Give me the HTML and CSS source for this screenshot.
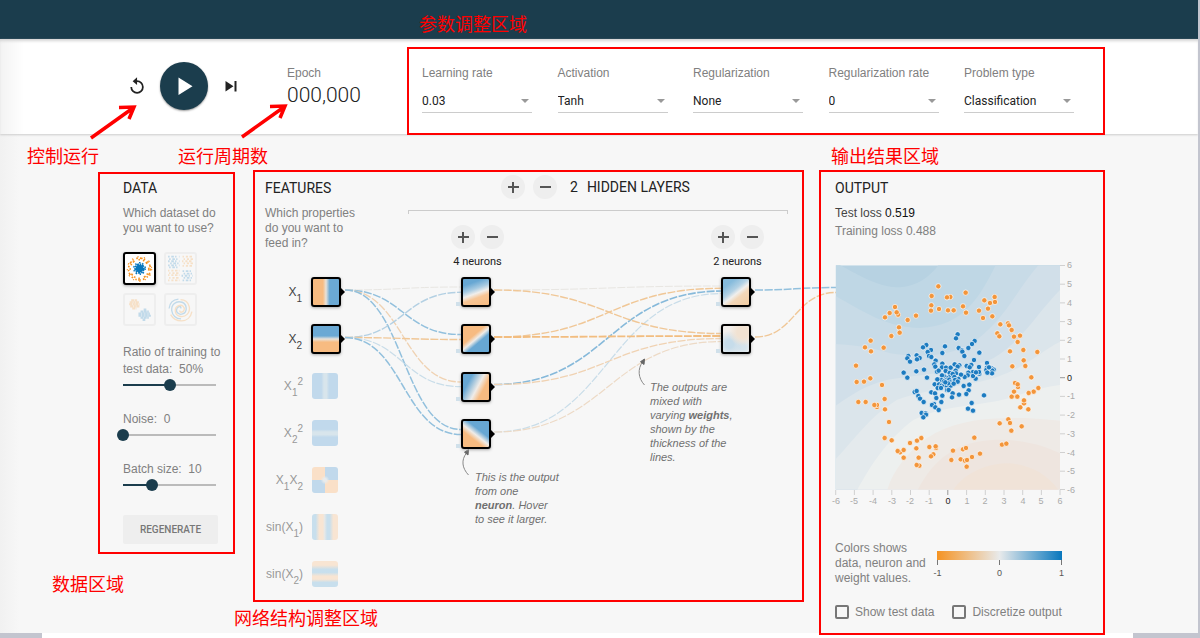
FILE: index.html
```html
<!DOCTYPE html>
<html lang="en">
<head>
<meta charset="utf-8">
<title>Neural network playground</title>
<link rel="stylesheet" href="styles.css">
</head>
<body>
<header class="masthead"></header>

<section class="toolbar">
  <div class="transport">
    <button class="icon-btn" aria-label="Reset"><svg width="24" height="24" viewBox="0 0 24 24"><path d="M12 6V2.500L7 7l5 4.500V8a5.600 5.600 0 1 1-5.600 5.600H4.400A7.600 7.600 0 1 0 12 6z" transform="translate(1.500 1) scale(.88)"/></svg></button>
    <button class="play" aria-label="Run"><svg width="48" height="48" viewBox="0 0 48 48"><path d="M18.500 15.500v17.500L32.500 24.300z"/></svg></button>
    <button class="icon-btn" aria-label="Step"><svg width="24" height="24" viewBox="0 0 24 24"><path d="M6.500 7v10.500l8-5.200zM15.500 7h2v10.500h-2z"/></svg></button>
    <svg class="pointer pointer-run" width="50" height="40" viewBox="0 0 50 40"><path d="M3 36L45 6M31 5.500L46 5L41 17"/></svg>
    <span class="note note-run" lang="zh">控制运行</span>
  </div>
  <div class="epoch">
    <span class="label">Epoch</span>
    <output class="epoch-value">000,000</output>
    <svg class="pointer pointer-epoch" width="50" height="40" viewBox="0 0 50 40"><path d="M3 36L45 6M31 5.500L46 5L41 17"/></svg>
    <span class="note note-epoch" lang="zh">运行周期数</span>
  </div>
  <form class="params framed">
    <span class="note note-params" lang="zh">参数调整区域</span>
    <div class="field"><label for="rate">Learning rate</label><select id="rate"><option>0.03</option></select></div>
    <div class="field"><label for="act">Activation</label><select id="act"><option>Tanh</option></select></div>
    <div class="field"><label for="reg">Regularization</label><select id="reg"><option>None</option></select></div>
    <div class="field"><label for="regrate">Regularization rate</label><select id="regrate"><option>0</option></select></div>
    <div class="field"><label for="problem">Problem type</label><select id="problem"><option>Classification</option></select></div>
  </form>
</section>

<main class="board">
  <section class="data framed">
    <h2>DATA</h2>
    <p class="lead">Which dataset do you want to use?</p>
    <div class="datasets">
      <button class="dataset selected" aria-label="Circle"><svg viewBox="0 0 28 28">
        <g fill="none" stroke="#f59322" stroke-width="1.600"><circle cx="14" cy="14.500" r="10.600" stroke-dasharray="1.600 2.100 2.600 1.400 1.300 2.600"/><circle cx="14" cy="14.500" r="9" stroke-dasharray="1.500 2.900 1.500 1.800 2 4"/><circle cx="14" cy="14.500" r="11.800" stroke-width="1" stroke-dasharray="1.200 4.200 1.500 5"/></g>
        <g fill="none" stroke="#0877bd"><circle cx="14" cy="14" r="1.800" stroke-width="3.600"/><circle cx="14" cy="14" r="4.200" stroke-width="1.800" stroke-dasharray="2.500 .8 1.500 .6"/><circle cx="14" cy="14" r="5.600" stroke-width="1.300" stroke-dasharray="1.300 2.600 1.500 1.700"/></g></svg></button>
      <button class="dataset" aria-label="Exclusive or"><svg viewBox="0 0 28 28">
        <g fill="none" stroke-width="1.700"><path stroke="#0877bd" stroke-dasharray="1.500 1.600 2.500 1.200 1.300 2.400" d="M2 2.500h11M3 5h10M2 7h11M4 9h9M2 11h11M3 13h9M16 16.500h10M17 19h9M15 21h11M17 23h8M16 25.500h10"/><path stroke="#f59322" stroke-dasharray="1.300 1.900 2 1.500 2.400 1.300" d="M16 2.500h10M17 5h9M15.500 7h10M17 9h9M16 11.500h10M2 16h11M3 18.500h9M2 20.500h11M3 23h10M2 25.500h11"/></g></svg></button>
      <button class="dataset" aria-label="Gaussian"><svg viewBox="0 0 28 28">
        <g fill="none"><path stroke="#f59322" stroke-width="2" stroke-dasharray="3 .5 2 .4" d="M6 5h6M4.500 7h9M4 9h10M5 11h9M7 13h4"/><path stroke="#0877bd" stroke-width="2" stroke-dasharray="2.600 .4 3 .4" d="M18 14h3M15 16h8M13 18h11M13 20h12M15 22h8M17 24h3"/></g></svg></button>
      <button class="dataset" aria-label="Spiral"><svg viewBox="0 0 28 28">
        <g fill="none" stroke-width="1.300"><path stroke="#0877bd" d="M14 13C15.500 11 12 10 10.500 13c-1.600 3.500 2 6.600 5.500 5.300C21 16.500 20.500 9 15.500 7 9.500 5 5 9.500 5.500 15c.6 4.500 4 8 9 8M3 13C3.500 8 7 4.500 12 4"/><path stroke="#f59322" d="M13.500 15C12.500 17 16.500 17.500 17.500 14.500c1-3-2-5.500-5.300-4.300C7.500 12 8 19 13 20.500c6 1.700 10.500-3.500 9.500-9C21.500 7 18 4.500 14 4.500M4.500 19c2.500 4.500 6 6 10.500 6 5 0 9-3.500 10-9"/></g></svg></button>
    </div>
    <div class="slider"><label for="ratio">Ratio of training to<br>test data:&nbsp; 50%</label><input id="ratio" type="range" min="0" max="100" value="50" style="--fill:.5"></div>
    <div class="slider"><label for="noise">Noise:&nbsp; 0</label><input id="noise" type="range" min="0" max="50" value="0" style="--fill:0"></div>
    <div class="slider"><label for="batch">Batch size:&nbsp; 10</label><input id="batch" type="range" min="1" max="30" value="10" style="--fill:.31"></div>
    <button class="regenerate">REGENERATE</button>
    <span class="note note-data" lang="zh">数据区域</span>
  </section>

  <section class="network framed">
    <svg class="wires" width="551" height="432" viewBox="253 170 551 432">
      <g class="wire">
        <path class="w0" d="M345 290C403 290 403 287 461 287"/>
        <path class="b2" d="M345 290C403 290 403 334.500 461 334.500"/>
        <path class="o1" d="M345 290C403 290 403 382 461 382"/>
        <path class="b2" d="M345 290C403 290 403 429.500 461 429.500"/>
        <path class="b1" d="M345 337.500C403 337.500 403 292.300 461 292.300"/>
        <path class="o2" d="M345 337.500C403 337.500 403 339.500 461 339.500"/>
        <path class="b0" d="M345 337.500C403 337.500 403 386.700 461 386.700"/>
        <path class="b2" d="M345 337.500C403 337.500 403 434.500 461 434.500"/>
        <path class="w0" d="M494 290C608 290 608 286 722 286"/>
        <path class="o2" d="M494 337C608 337 608 288.300 722 288.300"/>
        <path class="b3" d="M494 384.500C608 384.500 608 291 722 291"/>
        <path class="b0" d="M494 432C608 432 608 293.500 722 293.500"/>
        <path class="o2" d="M494 290C608 290 608 333.500 722 333.500"/>
        <path class="o3" d="M494 337C608 337 608 336 722 336"/>
        <path class="o1" d="M494 384.500C608 384.500 608 338.500 722 338.500"/>
        <path class="o0" d="M494 432C608 432 608 341.500 722 341.500"/>
        <path class="b2" d="M755 290C795 290 795 287.500 836 287.500"/>
        <path class="o2" d="M755 337C795 337 795 292.500 836 292.500"/>
      </g>
      <g class="hint-line">
        <path d="M468.500 475C462 468 461 460 466.500 453"/><path class="tip" d="M468.500 449.500l-.5 5.500-3.500-2.800z"/>
        <path d="M644.500 385C638 378 637.500 369 642.500 362"/><path class="tip" d="M644.500 359l-.5 5.500-3.500-2.800z"/>
      </g>
    </svg>

    <div class="features">
      <h2>FEATURES</h2>
      <p class="lead">Which properties do you want to feed in?</p>
      <ul class="feature-list">
        <li><span>X<sub>1</sub></span><i class="node t-x1"></i></li>
        <li><span>X<sub>2</sub></span><i class="node t-x2"></i></li>
        <li class="off"><span>X<sub>1</sub><sup>2</sup></span><i class="node t-x1sq"></i></li>
        <li class="off"><span>X<sub>2</sub><sup>2</sup></span><i class="node t-x2sq"></i></li>
        <li class="off"><span>X<sub>1</sub>X<sub>2</sub></span><i class="node t-x1x2"></i></li>
        <li class="off"><span>sin(X<sub>1</sub>)</span><i class="node t-sin1"></i></li>
        <li class="off"><span>sin(X<sub>2</sub>)</span><i class="node t-sin2"></i></li>
      </ul>
    </div>

    <div class="hidden">
      <div class="hidden-head">
        <div class="pair wide"><button class="round" aria-label="Add layer"></button><button class="round minus" aria-label="Remove layer"></button></div>
        <h2><span class="count">2</span>HIDDEN LAYERS</h2>
      </div>
      <div class="bracket"></div>
      <div class="layers">
        <div class="layer">
          <div class="pair"><button class="round" aria-label="Add neuron"></button><button class="round minus" aria-label="Remove neuron"></button></div>
          <p class="neurons">4 neurons</p>
          <div class="stack"><i class="node biased t-a1"></i><i class="node biased t-a2"></i><i class="node biased t-a3"></i><i class="node biased t-a4"></i></div>
        </div>
        <div class="layer">
          <div class="pair"><button class="round" aria-label="Add neuron"></button><button class="round minus" aria-label="Remove neuron"></button></div>
          <p class="neurons">2 neurons</p>
          <div class="stack two"><i class="node biased t-b1"></i><i class="node biased t-b2"></i></div>
        </div>
      </div>
    </div>

    <p class="hint hint-neuron">This is the output<br>from one<br><b>neuron</b>. Hover<br>to see it larger.</p>
    <p class="hint hint-weights">The outputs are<br>mixed with<br>varying <b>weights</b>,<br>shown by the<br>thickness of the<br>lines.</p>
    <span class="note note-network" lang="zh">网络结构调整区域</span>
  </section>

  <section class="output framed">
    <span class="note note-output" lang="zh">输出结果区域</span>
    <h2>OUTPUT</h2>
    <p class="loss">Test loss <b>0.519</b></p>
    <p class="loss train">Training loss 0.488</p>
    <svg class="chart" width="244" height="240" viewBox="15 15 244 240">
      <defs>
        <clipPath id="plot"><path d="M47 46h673v673H47z"/></clipPath>
        <marker id="po" markerUnits="userSpaceOnUse" markerWidth="20" markerHeight="20" refX="10" refY="10"><circle cx="10" cy="10" r="8" fill="#f3953a" stroke="#fff" stroke-width="2"/></marker>
        <marker id="pb" markerUnits="userSpaceOnUse" markerWidth="20" markerHeight="20" refX="10" refY="10"><circle cx="10" cy="10" r="8" fill="#1c7bc0" stroke="#fff" stroke-width="2"/></marker>
      </defs>
      <g transform="scale(.33333)">
        <g clip-path="url(#plot)">
          <path fill="#b7d2e2" d="M47 46h673v673H47z"/>
          <path fill="#bfd7e5" d="M47 38L65 48C150 95 190 112 240 112C290 110 330 80 355 46H720V719H47z"/>
          <path fill="#c8dbe7" d="M47 138C130 185 200 232 300 234C430 230 480 140 527 46H720V719H47z"/>
          <path fill="#d1dfe9" d="M47 282C100 285 150 290 210 310C300 325 400 320 470 270C560 200 590 120 655 46H720V719H47z"/>
          <path fill="#dbe5eb" d="M47 467C100 430 140 405 200 390C320 372 430 365 520 325C610 270 650 190 720 120V719H47z"/>
          <path fill="#e4eaed" d="M47 628C110 560 150 500 230 450C340 410 470 410 560 370C630 340 670 300 720 275V719H47z"/>
          <path fill="#edf0ef" d="M112 719C150 650 200 570 280 510C380 460 490 470 580 440C640 420 680 410 720 405V719z"/>
          <path fill="#eeeae6" d="M202 719C220 660 260 610 320 565C390 520 470 505 560 505C630 502 680 510 720 512V719z"/>
          <path fill="#eee5df" d="M293 719C320 670 350 625 420 590C500 560 620 560 720 610V719z"/>
          <path fill="#f0e3d8" d="M400 719C430 675 490 642 560 640C620 640 680 670 715 719z"/>
        </g>
        <polyline fill="none" marker-start="url(#po)" marker-mid="url(#po)" marker-end="url(#po)" points="355,109 335,138 437,128 391,141 381,142 334,166 333,182 357,177 384,181 401,181 429,169 438,188 477,182 493,151 524,141 525,156 510,159 504,176 489,204 517,199 225,171 209,189 234,194 230,187 195,202 263,210 288,197 237,232 239,248 214,258 152,272 135,292 153,304 191,293 108,347 110,396 132,395 151,385 186,405 115,456 137,456 171,471 171,465 163,465 194,447 195,478 207,516 194,564 215,571 270,579 291,572 304,564 289,595 240,607 233,603 251,600 251,623 296,623 298,647 290,645 328,591 348,594 347,589 340,613 333,619 399,602 394,630 429,598 438,594 422,628 435,632 441,630 456,621 480,611 440,650 463,563 541,223 564,220 567,226 575,240 532,250 538,259 582,260 600,257 593,276 570,304 610,300 652,306 611,331 616,348 577,349 634,382 655,414 641,425 626,429 585,399 594,411 593,403 582,425 590,439 592,440 575,440 612,460 612,451 601,472 625,478 539,520 565,508 570,519 574,542 605,529 546,584 559,581"/>
        <polyline fill="none" marker-start="url(#pb)" marker-mid="url(#pb)" marker-end="url(#pb)" points="413,253 408,265 464,273 456,282 375,289 367,309 319,285 309,292 333,300 323,306 327,318 334,321 265,318 262,325 270,335 290,316 299,324 291,328 416,294 426,301 427,305 445,294 478,308 433,318 462,330 347,332 343,343 346,350 312,359 289,364 251,368 262,383 321,383 367,341 366,352 378,353 392,353 404,343 418,346 413,350 407,362 408,370 440,348 454,345 449,352 477,351 501,339 501,353 515,355 521,359 499,360 517,362 516,370 502,368 478,371 477,366 459,366 445,368 443,376 434,381 423,374 415,387 467,386 459,378 351,365 356,362 377,363 389,369 388,382 378,383 371,378 366,376 355,388 365,390 377,391 388,389 394,395 398,372 403,381 401,394 405,390 413,395 344,403 357,403 365,407 373,405 381,409 392,407 353,414 363,414 381,420 386,420 431,408 448,404 446,421 439,432 417,434 398,430 396,442 284,426 290,423 295,438 300,446 311,456 334,427 345,430 349,444 367,437 364,456 342,462 336,465 346,472 356,480 305,489 317,490 318,494 310,502 444,476 455,459 459,482 492,436 401,401 372,394 384,400 376,397 468,367 507,352 352,388"/>
      </g>
      <g class="axis" stroke="#d0d0d0">
        <path d="M240 15.500h5M240 34.200h5M240 52.900h5M240 71.600h5M240 90.300h5M240 109h5M240 146.400h5M240 165.100h5M240 183.800h5M240 202.500h5M240 221.200h5M240 239.500h5M15.700 240v5M34.400 240v5M53.100 240v5M71.800 240v5M90.500 240v5M109.200 240v5M146.600 240v5M165.300 240v5M184 240v5M202.700 240v5M221.400 240v5M240 240v5"/>
        <path stroke="#999" d="M240 127.700h5M127.800 240v5"/>
      </g>
      <g class="axis-text">
        <text x="247" y="18">6</text><text x="247" y="37">5</text><text x="247" y="56">4</text><text x="247" y="75">3</text><text x="247" y="93">2</text><text x="247" y="112">1</text><text class="zero" x="247" y="131">0</text><text x="247" y="149">-1</text><text x="247" y="168">-2</text><text x="247" y="187">-3</text><text x="247" y="206">-4</text><text x="247" y="224">-5</text><text x="247" y="243">-6</text>
      </g>
      <g class="axis-text mid">
        <text x="16" y="254">-6</text><text x="34" y="254">-5</text><text x="53" y="254">-4</text><text x="72" y="254">-3</text><text x="90" y="254">-2</text><text x="109" y="254">-1</text><text class="zero" x="128" y="254">0</text><text x="147" y="254">1</text><text x="165" y="254">2</text><text x="184" y="254">3</text><text x="203" y="254">4</text><text x="221" y="254">5</text><text x="240" y="254">6</text>
      </g>
    </svg>
    <div class="legend">
      <p class="lead">Colors shows data, neuron and weight values.</p>
      <div class="scale"><div class="ramp"></div><div class="marks"><span>-1</span><span>0</span><span>1</span></div></div>
    </div>
    <div class="checks">
      <label><input type="checkbox">Show test data</label>
      <label><input type="checkbox">Discretize output</label>
    </div>
  </section>
</main>
<footer class="edge"></footer>
</body>
</html>
```
FILE: styles.css
```css
* { box-sizing: border-box; }
body {
  margin: 0;
  min-height: 100vh;
  display: flex;
  flex-direction: column;
  background: #f7f7f7;
  border-right: 2px solid #c3c5cf;
  color: #808080;
  font: 400 12px/15px "Liberation Sans", sans-serif;
}
h2, p, ul { margin: 0; padding: 0; }
h2 { font: 400 14px/18px Roboto, sans-serif; color: #222; }
button { border: 0; padding: 0; background: none; font-family: inherit; }
svg { display: block; }

/* Red annotation frames and captions */
.framed { position: relative; }
.framed::after {
  content: "";
  position: absolute;
  inset: 0;
  border: 2px solid #f00;
  pointer-events: none;
  z-index: 2;
}
.note {
  position: absolute;
  z-index: 3;
  white-space: nowrap;
  color: #f00;
  font: 400 18px/24px "Noto Sans CJK SC", sans-serif;
}
.note-run { left: -98px; top: 81px; }
.note-epoch { left: -109px; top: 78px; }
.note-params { left: 12px; top: -36px; }
.note-data { left: -46px; bottom: -41px; }
.note-network { left: -19px; bottom: -27px; }
.note-output { left: 12px; top: -27px; }
.pointer { position: absolute; z-index: 3; fill: none; stroke: #f00; stroke-width: 3.5; }
.pointer-run { left: -37px; top: 40px; }
.pointer-epoch { left: -48px; top: 36px; }

.masthead { height: 39px; background: #1b3d4d; }
.toolbar {
  position: relative;
  display: flex;
  align-items: flex-start;
  padding: 8px 93px 0 98px;
  background: linear-gradient(90deg, #f3f3f3, #fff 24px);
  box-shadow: inset 0 3px 3px -1px #d5d5d5, 0 1px 2px #ccc;
}
.transport { position: relative; display: flex; align-items: center; gap: 11px; margin: 15px 0 0 27px; }
.icon-btn { width: 24px; height: 24px; fill: #222; }
.play { width: 48px; height: 48px; border-radius: 50%; background: #1b3d4d; fill: #fff; box-shadow: 0 1px 2px #999; }
.epoch { position: relative; display: flex; flex-direction: column; margin: 18px 0 0 44px; line-height: 16px; }
.epoch-value { font: 300 21px/28px Roboto, sans-serif; color: #222; }
.params {
  display: flex;
  justify-content: space-between;
  flex: 0 1 698px;
  margin: 0 0 -1px auto;
  padding: 18px 31px 22px 15px;
}
.field { position: relative; display: flex; flex-direction: column; gap: 8px; width: 110px; line-height: 16px; }
.field label { white-space: nowrap; }
.field::after {
  content: "";
  position: absolute;
  right: 3px;
  bottom: 10px;
  border: 4px solid transparent;
  border-top-color: #999;
  border-bottom: 0;
}
select {
  appearance: none;
  height: 24px;
  padding: 0;
  border: 0;
  border-bottom: 1px solid #ccc;
  background: none;
  color: #222;
  font: 400 12px/20px Roboto, sans-serif;
}

.board {
  flex: 1;
  display: grid;
  grid-template-columns: 137px minmax(554px, 1fr) 286px;
  column-gap: 15px;
  align-items: start;
  padding: 36px 93px 0 98px;
  background: linear-gradient(90deg, #f1f1f1, #f7f7f7 20px);
}

/* Data column */
.data { margin-top: 2px; padding: 7px 16px 10px 25px; }
.lead { margin-top: 9px; }
.datasets { display: grid; grid-template-columns: 33px 33px; gap: 8px; margin: 16px 0 18px; }
.dataset { width: 33px; height: 33px; border: 2px solid #eee; border-radius: 3px; }
.dataset svg { opacity: .22; }
.dataset.selected { border-color: #000; background: #fff; box-shadow: 0 1px 3px #aaa; }
.dataset.selected svg { opacity: 1; }
.slider { display: flex; flex-direction: column; line-height: 17px; margin-bottom: 19px; white-space: nowrap; }
input[type="range"] {
  appearance: none;
  width: 105px;
  height: 14px;
  margin: 0 -6px;
  background:
    linear-gradient(#1b3d4d, #1b3d4d) 6px center / calc(var(--fill) * 93px) 2px no-repeat,
    linear-gradient(#bbb, #bbb) 6px center / 93px 2px no-repeat;
}
input[type="range"]::-webkit-slider-thumb { appearance: none; width: 12px; height: 12px; border-radius: 50%; background: #1b3d4d; }
.regenerate { width: 95px; height: 29px; margin-top: 4px; border-radius: 2px; background: #eee; color: #777; font: 500 10px/29px Roboto, sans-serif; }

/* Network */
.network { display: flex; height: 432px; margin-left: 3px; padding: 0 16px 0 12px; }
.wires { position: absolute; left: 0; top: 0; overflow: visible; }
.wire { fill: none; stroke-dasharray: 8 1.500; }
.w0 { stroke: #e8e6e2; stroke-width: 1; }
.b0 { stroke: #c9dde9; stroke-width: 1.200; }
.b1 { stroke: #b3d0e3; stroke-width: 1.400; }
.b2 { stroke: #92c0dd; stroke-width: 1.500; }
.b3 { stroke: #86b9da; stroke-width: 1.600; }
.o0 { stroke: #eddac6; stroke-width: 1.200; }
.o1 { stroke: #f0d2b2; stroke-width: 1.300; }
.o2 { stroke: #f0c797; stroke-width: 1.400; }
.o3 { stroke: #f2bd80; stroke-width: 1.800; }
.hint-line { fill: none; stroke: #888; stroke-width: 1; }
.hint-line .tip { fill: #666; stroke: #666; }
.features { position: relative; width: 76px; padding-top: 9px; }
.features .lead { width: 96px; }
.feature-list { display: flex; flex-direction: column; justify-content: space-between; height: 312px; margin-top: 26px; list-style: none; }
.feature-list li { display: flex; justify-content: flex-end; align-items: center; gap: 9px; height: 30px; color: #444; white-space: nowrap; }
.feature-list .off { color: #999; padding-right: 3px; }
sub, sup { font-size: 10px; line-height: 0; }
sub { vertical-align: -6px; }
sup { vertical-align: 5px; }
.node { position: relative; display: block; flex: none; width: 30px; height: 30px; border: 2px solid #000; border-radius: 3px; box-shadow: 0 1px 3px #aaa; }
.node::after { content: ""; position: absolute; right: -6px; top: 9px; border: 4px solid transparent; border-left-color: #000; border-right: 0; }
.biased::before { content: ""; position: absolute; left: -7px; bottom: -1px; width: 4px; height: 4px; background: #d0e0ea; }
.off .node { width: 26px; height: 26px; border: 0; box-shadow: none; }
.off .node::after { content: none; }
.t-x1 { background: linear-gradient(90deg, #f7bb81 38%, #e8e2da 50%, #6ba9d4 64%); }
.t-x2 { background: linear-gradient(#6ba9d4 38%, #e8e2da 50%, #f7bb81 62%); }
.t-x1sq { background: linear-gradient(90deg, #c1d9ec 36%, #d8e5ec 46% 56%, #c1d9ec 66%); }
.t-x2sq { background: linear-gradient(#c1d9ec 36%, #d8e5ec 46% 56%, #c1d9ec 66%); }
.t-x1x2 { background: radial-gradient(#e8ebec 8%, transparent 24%), conic-gradient(#c1d9ec 25%, #fae0c8 0 50%, #c1d9ec 0 75%, #fae0c8 0); }
.t-sin1 { background: linear-gradient(90deg, #c8dfed 14%, #f8e5d3 28% 42%, #e8e8e6 48%, #c8dfed 58% 68%, #f8e5d3 82%); }
.t-sin2 { background: linear-gradient(#f8e5d3 16%, #c8dfed 32% 44%, #f8e5d3 58% 70%, #c8dfed 82%); }
.t-a1 { background: linear-gradient(160deg, #67a7d3 20%, #a8cbe2 40%, #f0eeeb 54%, #f7c595 68%, #f7bb81); }
.t-a2 { background: linear-gradient(140deg, #f7bb81 38%, #efece8 50%, #67a7d3 62%); }
.t-a3 { background: linear-gradient(118deg, #67a7d3 24%, #efece8 54%, #f7bb81 72%); }
.t-a4 { background: linear-gradient(38deg, #f7bb81 34%, #efece8 48%, #67a7d3 64%); }
.t-b1 { background: linear-gradient(142deg, #86bbdc 20%, #b4d2e5 42%, #f0efed 54%, #f2d7b9 66%, #f2cda2); }
.t-b2 { background: radial-gradient(circle at 75% 25%, #f1e2d2 20%, transparent 50%), radial-gradient(circle at 25% 70%, #c6dcea 15%, transparent 50%), radial-gradient(circle at 75% 80%, #d4e3ec 10%, transparent 40%), #f2efec; }

.hidden { flex: 1; margin-left: 67px; padding-top: 5px; }
.hidden-head { display: flex; align-items: center; padding-left: 93px; gap: 13px; }
.pair { display: flex; gap: 5px; }
.pair.wide { gap: 8px; }
.count { margin-right: 9px; }
.round {
  width: 24px;
  height: 24px;
  border-radius: 50%;
  background:
    linear-gradient(#555, #555) center / 11px 2px no-repeat,
    linear-gradient(#555, #555) center / 2px 11px no-repeat,
    #eee;
}
.minus { background: linear-gradient(#555, #555) center / 11px 2px no-repeat, #eee; }
.bracket { height: 4px; margin-top: 11px; border: solid #ccc; border-width: 1px 1px 0; }
.layers { display: flex; justify-content: space-between; padding: 11px 24px 0 43px; }
.layer { display: flex; flex-direction: column; align-items: center; }
.neurons { margin-top: 5px; color: #222; font: 400 11px/15px Roboto, sans-serif; }
.stack { display: flex; flex-direction: column; justify-content: space-between; height: 172px; margin: 8px 4px 0 0; }
.stack.two { height: 77px; }
.hint { position: absolute; font-size: 11px; line-height: 14px; font-style: italic; color: #707070; white-space: nowrap; }
.hint b { font-weight: 700; }
.hint-neuron { left: 222px; top: 300px; }
.hint-weights { left: 397px; top: 210px; }

/* Output column */
.output { margin-bottom: -2px; padding: 9px 16px 15px; }
.loss { margin-top: 9px; color: #444; }
.loss b { font-weight: 400; color: #111; }
.train { margin-top: 3px; color: #808080; }
.chart { margin-top: 26px; overflow: visible; }
.axis-text { fill: #aaa; font: 400 9px "Liberation Sans", sans-serif; }
.axis-text .zero { fill: #222; }
.mid { text-anchor: middle; }
.legend { display: flex; justify-content: space-between; margin: 36px 27px 0 0; }
.legend .lead { width: 92px; margin: 0; }
.scale { width: 125px; padding-top: 10px; }
.ramp { height: 9px; background: linear-gradient(90deg, #f59322, #e8eaeb 50%, #0877bd); }
.marks { display: flex; justify-content: space-between; margin: 0 -8px; font: 400 9px/12px "Liberation Sans", sans-serif; color: #555; }
.marks span { width: 17px; text-align: center; }
.marks span::before { content: ""; display: block; width: 1px; height: 5px; margin: 0 auto 2px; background: #777; }
.checks { display: flex; gap: 18px; margin-top: 18px; }
.checks label { display: flex; align-items: center; gap: 6px; height: 16px; white-space: nowrap; }
.checks input { appearance: none; width: 14px; height: 14px; margin: 0; border: 2px solid #777; border-radius: 2px; }

.edge { height: 5px; background: linear-gradient(90deg, #c3c5cf 42px, #fff 0 calc(100% - 65px), #c3c5cf 0); }
```
